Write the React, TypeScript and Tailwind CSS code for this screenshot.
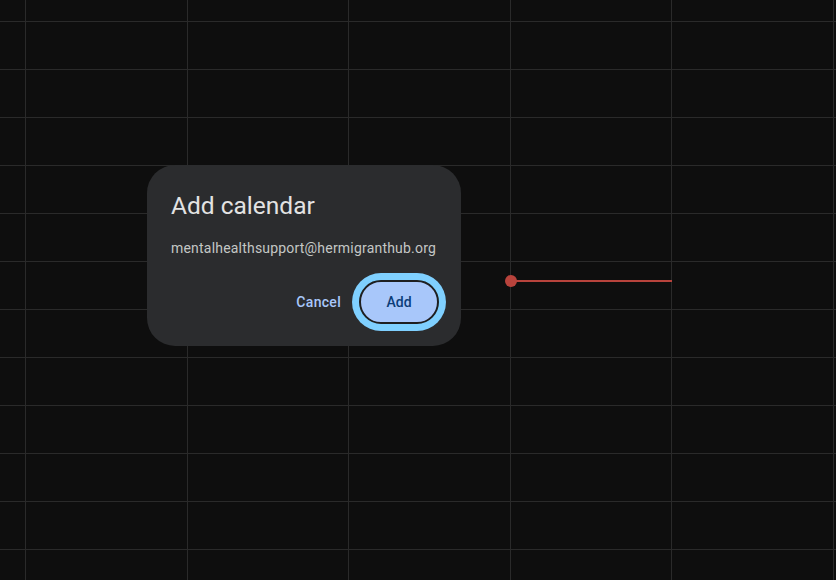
import React from 'react'

const COLS = [0, 1, 2, 3, 4]
const ROWS = Array.from({ length: 12 }, (_, i) => i)

function GridRow({ top, tall }: { top: boolean; tall: boolean }) {
  return (
    <div className={`flex shrink-0 ${tall ? 'h-[48px]' : 'h-[21px]'} ${top ? 'border-t border-[#2a2a2a]' : ''}`}>
      <div className="w-[25px] shrink-0" />
      {COLS.map((c) => (
        <div key={c} className={`flex-1 border-l border-[#2a2a2a] ${c === 4 ? 'border-r' : ''}`} />
      ))}
      <div className="w-[2px] shrink-0" />
    </div>
  )
}

export default function App() {
  return (
    <div className="relative h-[580px] w-[836px] overflow-hidden bg-[#0e0e0e] font-['Roboto',sans-serif]">
      {/* calendar grid */}
      <div className="flex h-full w-full flex-col">
        <GridRow top={false} tall={false} />
        {ROWS.map((r) => (
          <GridRow key={r} top tall />
        ))}
      </div>

      {/* current time line */}
      <div className="absolute left-[505px] top-[275px] flex w-[167px] items-center">
        <div className="h-3 w-3 shrink-0 rounded-full bg-[#b8433c]" />
        <div className="-ml-1 h-[2px] flex-1 bg-[#b8433c]" />
      </div>

      {/* dialog */}
      <div className="absolute left-[147px] top-[165px] w-[314px] rounded-[28px] bg-[#2b2c2e] px-6 pb-[22px] pt-[25px]">
        <h2 className="text-[24.5px] leading-8 text-[#e3e3e3]">Add calendar</h2>
        <p className="mt-4 text-[14px] leading-5 tracking-[0.2px] text-[#c4c7c5]">
          mentalhealthsupport@hermigranthub.org
        </p>
        <div className="mt-[22px] flex items-center justify-end gap-[18px]">
          <button className="text-[14px] font-medium tracking-[0.3px] text-[#a8c7fa]">Cancel</button>
          <button className="mr-[-2px] h-[44px] w-[80px] rounded-full border-2 border-[#1e1f20] bg-[#a8c7fa] text-[14px] font-medium text-[#0b3d78] ring-[7px] ring-[#7fd0ff]">
            Add
          </button>
        </div>
      </div>
    </div>
  )
}
